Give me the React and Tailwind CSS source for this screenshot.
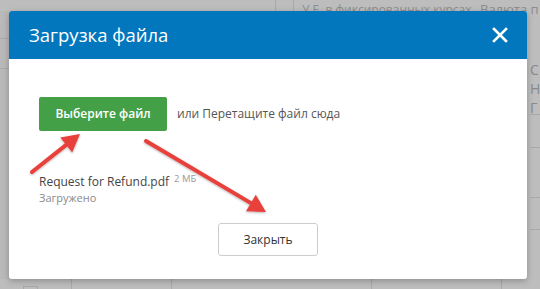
import React from 'react'

const font = { fontFamily: '"Open Sans", "Noto Sans", sans-serif' }

const Arrow = ({ x1, y1, x2, y2 }) => {
  const a = Math.atan2(y2 - y1, x2 - x1)
  const len = 20
  const w = 0.5
  const p1 = [x2 - len * Math.cos(a - w), y2 - len * Math.sin(a - w)]
  const p2 = [x2 - len * Math.cos(a + w), y2 - len * Math.sin(a + w)]
  const bx = x2 - 14 * Math.cos(a)
  const by = y2 - 14 * Math.sin(a)
  return (
    <g>
      <line x1={x1} y1={y1} x2={bx} y2={by} stroke="#e8403a" strokeWidth="4" strokeLinecap="round" />
      <polygon points={`${x2},${y2} ${p1[0]},${p1[1]} ${p2[0]},${p2[1]}`} fill="#e8403a" />
    </g>
  )
}

const App = () => {
  return (
    <div className="relative w-[540px] h-[289px] overflow-hidden bg-[#bdbdbd]" style={font}>
      {/* dimmed page behind the dialog */}
      <div className="flex flex-col h-full">
        <div className="h-[11px] flex items-end pl-[275px] gap-[8px] text-[#8d8d8d] whitespace-nowrap">
          <div className="w-[19px] h-[16px] border border-[#a8a8a8] rounded-sm shrink-0 mb-[-3px]" />
          <span className="w-[170px] shrink-0 text-[12px] leading-[12px] mb-[-5px]">У.Е. в фиксированных курсах</span>
          <span className="text-[13px] leading-[13px] mb-[-5px]">Валюта п</span>
        </div>
        <div className="flex-1 flex justify-between">
          <div className="w-[9px] flex flex-col bg-[#b9b9b9]">
            <div className="h-[28px] border-b border-[#a9a9a9]" />
            <div className="h-[30px] border-b border-[#a9a9a9]" />
          </div>
          <div className="w-[13px] flex flex-col text-[#8a8a8a] text-[14px] leading-[19px] pl-[3px] overflow-hidden">
            <div className="h-[104px] border-b border-[#a9a9a9] pt-[49px]">
              <div>С</div>
              <div>Н</div>
              <div>Г</div>
            </div>
            <div className="h-[33px] border-b border-[#a9a9a9]" />
            <div className="h-[50px] border-b border-[#a9a9a9]" />
            <div className="h-[32px] border-b border-[#a9a9a9]" />
          </div>
        </div>
        <div className="h-[10px] flex">
          <div className="w-[72px] border-r border-[#a9a9a9] pl-[23px] pt-[7px]">
            <div className="w-[15px] h-[6px] border border-[#a8a8a8]" />
          </div>
          <div className="w-[100px] border-r border-[#a9a9a9]" />
          <div className="w-[200px] border-r border-[#a9a9a9]" />
          <div className="w-[130px] border-r border-[#a9a9a9]" />
        </div>
      </div>

      {/* dialog */}
      <div className="absolute left-[9px] top-[11px] w-[518px] h-[268px] bg-white rounded-[3px] shadow-[0_2px_6px_rgba(0,0,0,0.25)] overflow-hidden flex flex-col">
        <div className="h-[48px] bg-[#0277bd] flex items-center justify-between pl-[20px] pr-[19px]">
          <span className="text-white text-[18.5px] leading-none">Загрузка файла</span>
          <svg width="16" height="16" viewBox="0 0 16 16">
            <path d="M2 2 L14 14 M14 2 L2 14" stroke="white" strokeWidth="2.6" strokeLinecap="square" />
          </svg>
        </div>
        <div className="flex-1 flex flex-col pl-[30px] pt-[38px]">
          <div className="flex items-center gap-[10px]">
            <button className="w-[128px] h-[34px] bg-[#43a047] rounded-[2px] text-white text-[12px] font-semibold">
              Выберите файл
            </button>
            <span className="text-[#555555] text-[12px]">или Перетащите файл сюда</span>
          </div>
          <div className="mt-[42px] flex items-baseline gap-[5px]">
            <span className="text-[#444444] text-[12px]">Request for Refund.pdf</span>
            <span className="text-[#9a9a9a] text-[9.5px] relative top-[-4px]">2 МБ</span>
          </div>
          <div className="text-[#8a8a8a] text-[11px] leading-[16px] mt-[-1px]">Загружено</div>
          <div className="flex justify-center mt-[17px] pr-[30px]">
            <button className="w-[100px] h-[33px] border border-[#cccccc] rounded-[3px] bg-white text-[#333333] text-[12px]">
              Закрыть
            </button>
          </div>
        </div>
      </div>

      <svg className="absolute left-0 top-0 pointer-events-none" width="540" height="289">
        <defs>
          <filter id="sh" x="-20%" y="-20%" width="140%" height="140%">
            <feDropShadow dx="0" dy="1" stdDeviation="1.2" floodColor="#000" floodOpacity="0.3" />
          </filter>
        </defs>
        <g filter="url(#sh)">
          <Arrow x1={32} y1={172} x2={80} y2={134} />
          <Arrow x1={146} y1={141} x2={266} y2={212} />
        </g>
      </svg>
    </div>
  )
}

export default App
